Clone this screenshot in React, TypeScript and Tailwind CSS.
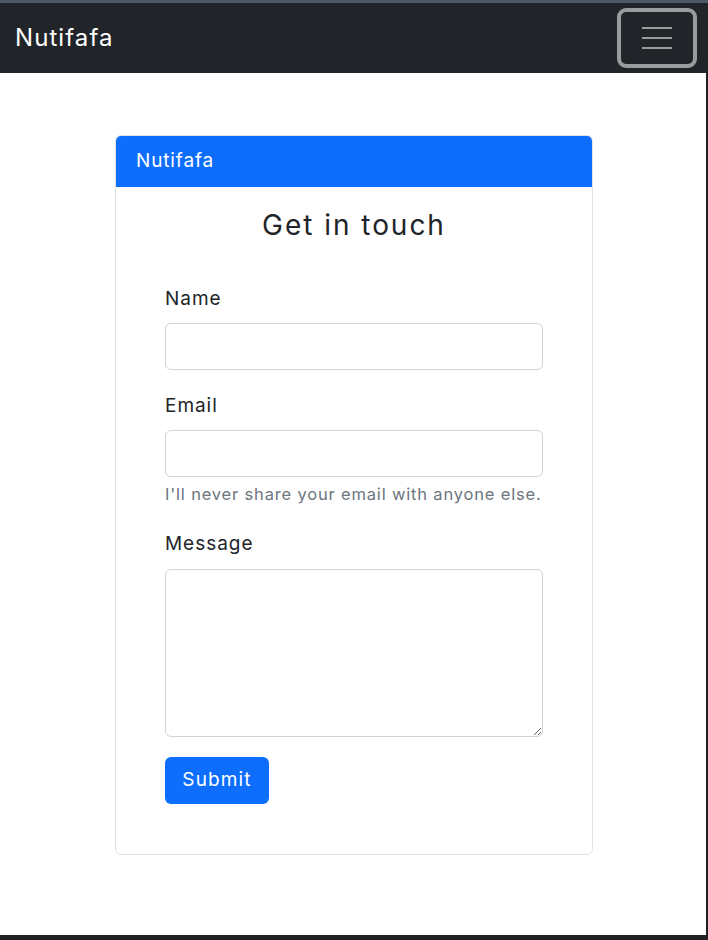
import React from 'react';

const font = { fontFamily: '"Inter", "Noto Sans", sans-serif' };

export default function App() {
  return (
    <div className="flex flex-col w-[708px] h-[940px] bg-white text-[#212529] tracking-[0.06em]" style={font}>
      {/* Top strip */}
      <div className="h-[3px] bg-[#4b5a66]" />

      {/* Navbar */}
      <nav className="h-[70px] bg-[#212529] flex items-center justify-between pl-[15px] pr-[11px]">
        <span className="text-white text-[24px] leading-none tracking-[0.045em]">Nutifafa</span>
        <button className="w-[80px] h-[60px] border-[4px] border-[#9a9b9d] rounded-[9px] flex flex-col items-center justify-center gap-[8px]">
          <span className="block w-[30px] h-[2px] bg-[#9a9b9d]" />
          <span className="block w-[30px] h-[2px] bg-[#9a9b9d]" />
          <span className="block w-[30px] h-[2px] bg-[#9a9b9d]" />
        </button>
      </nav>

      {/* Page body */}
      <main className="flex-1 border-r-2 border-[#212121] pt-[62px] pl-[115px]">
        <div className="w-[478px] border border-[#dee2e6] rounded-[6px] overflow-hidden">
          {/* Card header */}
          <div className="h-[51px] bg-[#0d6efd] text-white text-[19px] tracking-[0.045em] flex items-center px-[20px]">
            Nutifafa
          </div>

          {/* Card body */}
          <div className="px-[49px] pt-[21px] pb-[50px]">
            <h4 className="text-[28px] leading-[34px] text-center tracking-[0.07em]">Get in touch</h4>

            <form className="mt-[43px] flex flex-col">
              <label className="text-[19px] leading-[28px] mb-[10px]">Name</label>
              <input
                type="text"
                className="h-[47px] w-full border border-[#ced4da] rounded-[6px] px-3 outline-none"
              />

              <label className="text-[19px] leading-[28px] mt-[22px] mb-[10px]">Email</label>
              <input
                type="email"
                className="h-[47px] w-full border border-[#ced4da] rounded-[6px] px-3 outline-none"
              />
              <div className="text-[16.5px] leading-[24px] text-[#6c757d] mt-[5px] tracking-[0.05em]">
                I'll never share your email with anyone else.
              </div>

              <label className="text-[19px] leading-[28px] mt-[24px] mb-[11px]">Message</label>
              <textarea className="h-[168px] w-full border border-[#ced4da] rounded-[6px] px-3 py-2 outline-none" />

              <div className="mt-[20px]">
                <button
                  type="button"
                  className="h-[47px] w-[104px] bg-[#0d6efd] text-white text-[19px] rounded-[6px] tracking-[0.06em]"
                >
                  Submit
                </button>
              </div>
            </form>
          </div>
        </div>
      </main>

      {/* Bottom strip */}
      <div className="h-[5px] bg-[#212121]" />
    </div>
  );
}
